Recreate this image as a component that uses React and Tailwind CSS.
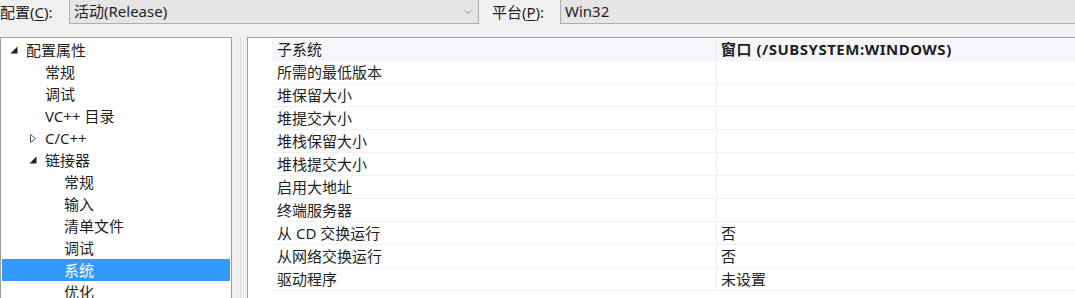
import { ChevronDown } from 'lucide-react'

const FONT = { fontFamily: '"Segoe UI", "Noto Sans", "Noto Sans CJK SC", sans-serif' }

const TREE = [
  { label: '配置属性', level: 0, icon: 'open' },
  { label: '常规', level: 1 },
  { label: '调试', level: 1 },
  { label: 'VC++ 目录', level: 1 },
  { label: 'C/C++', level: 1, icon: 'closed' },
  { label: '链接器', level: 1, icon: 'open' },
  { label: '常规', level: 2 },
  { label: '输入', level: 2 },
  { label: '清单文件', level: 2 },
  { label: '调试', level: 2 },
  { label: '系统', level: 2, selected: true },
  { label: '优化', level: 2 },
]

const PROPS = [
  { name: '子系统', value: '窗口 (/SUBSYSTEM:WINDOWS)', bold: true, active: true },
  { name: '所需的最低版本', value: '' },
  { name: '堆保留大小', value: '' },
  { name: '堆提交大小', value: '' },
  { name: '堆栈保留大小', value: '' },
  { name: '堆栈提交大小', value: '' },
  { name: '启用大地址', value: '' },
  { name: '终端服务器', value: '' },
  { name: '从 CD 交换运行', value: '否' },
  { name: '从网络交换运行', value: '否' },
  { name: '驱动程序', value: '未设置' },
]

function Expander({ kind }) {
  if (kind === 'open') {
    return (
      <svg width="8" height="8" viewBox="0 0 8 8" className="block">
        <polygon points="7.5,0.5 7.5,7.5 0.5,7.5" fill="#1e1e1e" />
      </svg>
    )
  }
  return (
    <svg width="8" height="9" viewBox="0 0 8 9" className="block">
      <polygon points="1.5,0.5 6.5,4.5 1.5,8.5" fill="none" stroke="#555" strokeWidth="1" />
    </svg>
  )
}

function TreeRow({ item }) {
  const iconLeft = item.level === 0 ? 'pl-[8px]' : 'pl-[27px]'
  const textPad = item.level === 0 ? 'pl-[24px]' : item.level === 2 ? 'pl-[62px]' : 'pl-[43px]'
  return (
    <div
      className={`relative h-[22px] flex items-center mx-[1px] ${item.selected ? 'bg-[#3399ff] text-white' : 'text-[#1e1e1e]'}`}
    >
      {item.icon && (
        <span className={`absolute left-0 top-0 h-full flex items-center ${iconLeft}`}>
          <Expander kind={item.icon} />
        </span>
      )}
      <span className={`${textPad} leading-none whitespace-nowrap`}>{item.label}</span>
    </div>
  )
}

function PropRow({ p }) {
  return (
    <div className={`flex h-[23px] border-b border-[#f2f2f2] ${p.active ? 'bg-[#f5f7fb]' : 'bg-white'}`}>
      <div className="w-[445px] flex items-center pl-[5px] border-r border-[#f0f0f0] text-[#1e1e1e] whitespace-nowrap">
        {p.name}
      </div>
      <div className={`flex-1 flex items-center pl-[4px] text-[#1e1e1e] whitespace-nowrap ${p.bold ? 'font-bold tracking-[0.5px]' : ''}`}>
        {p.value}
      </div>
    </div>
  )
}

export default function App() {
  return (
    <div className="w-[1075px] h-[298px] overflow-hidden bg-[#f0f0f0] text-[15px] flex flex-col" style={FONT}>
      {/* Toolbar */}
      <div className="h-[24px] flex items-stretch flex-shrink-0">
        <div className="w-[69px] flex items-center text-[#1e1e1e] whitespace-nowrap">
          配置(<span className="underline underline-offset-2">C</span>):
        </div>
        <div className="w-[410px] bg-[#e5e5e5] border-x border-b border-[#adadad] flex items-center pl-[4px] pr-[4px] text-[#1e1e1e]">
          <span className="flex-1">活动(Release)</span>
          <ChevronDown className="w-[12px] h-[12px] text-[#606060]" strokeWidth={1.5} />
        </div>
        <div className="w-[81px] flex items-center pl-[13px] text-[#1e1e1e] whitespace-nowrap">
          平台(<span className="underline underline-offset-2">P</span>):
        </div>
        <div className="flex-1 bg-[#e5e5e5] border-l border-b border-[#adadad] flex items-center pl-[4px] text-[#1e1e1e]">
          Win32
        </div>
      </div>

      <div className="h-[13px] flex-shrink-0" />

      {/* Panels */}
      <div className="flex flex-1 min-h-0">
        <div className="w-[232px] bg-white border-l border-t border-r border-[#a0a0a0] pt-[1px] flex-shrink-0">
          {TREE.map((t, i) => <TreeRow key={i} item={t} />)}
        </div>

        <div className="w-[15px] flex justify-center flex-shrink-0">
          <div className="w-[3px] border-x border-[#e4e4e4] bg-[#f5f5f5]" />
        </div>

        <div className="flex-1 bg-white border-l border-t border-[#a0a0a0] pl-[24px]">
          {PROPS.map((p, i) => <PropRow key={i} p={p} />)}
        </div>
      </div>
    </div>
  )
}
